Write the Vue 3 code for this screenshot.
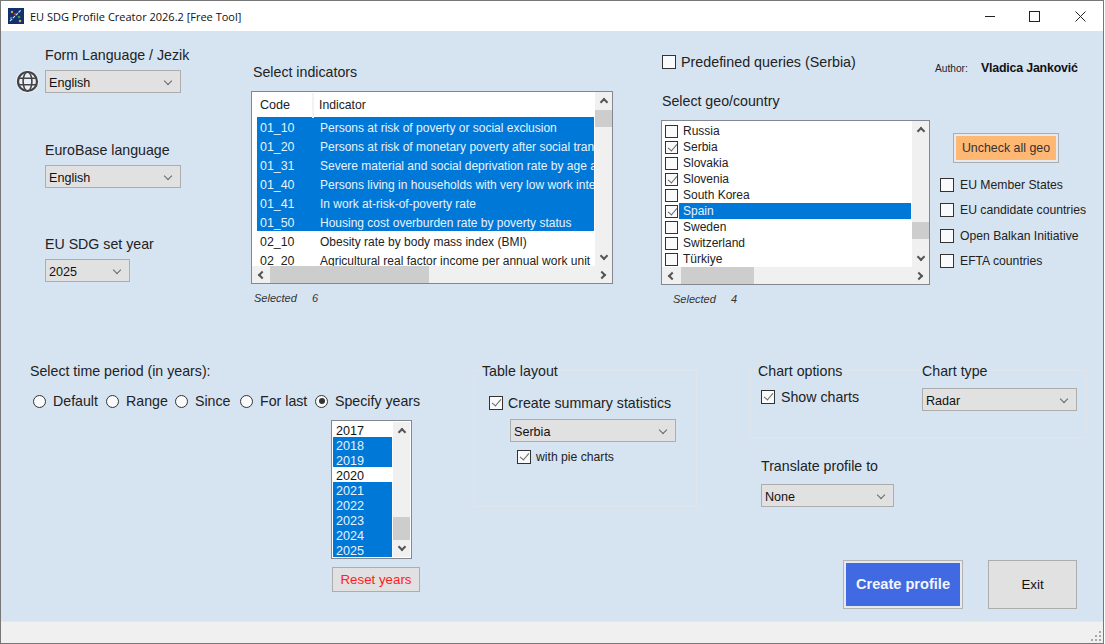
<template>
  <div class="window">
    <header class="titlebar">
      <svg class="logo" viewBox="0 0 16 16" width="16" height="16">
        <rect width="16" height="16" fill="#12306e" />
        <path d="M2 13 L13 2" stroke="#cfd8e8" stroke-width="1.2" stroke-dasharray="3 1" />
        <circle cx="4" cy="4" r="1.2" fill="#e0a030" />
        <circle cx="11" cy="9" r="1.3" fill="#3aa050" />
        <circle cx="7" cy="6" r="1" fill="#d04040" />
        <circle cx="12" cy="13" r="1.3" fill="#e0a030" />
        <circle cx="3" cy="10" r="1" fill="#4a90d0" />
      </svg>
      <span class="title">EU SDG Profile Creator 2026.2 [Free Tool]</span>
      <div class="caption">
        <button class="capbtn shift">
          <svg width="10" height="10" viewBox="0 0 10 10"><path d="M0 5.5H10" stroke="#222" /></svg>
        </button>
        <button class="capbtn shift">
          <svg width="11" height="11" viewBox="0 0 11 11"><rect x=".5" y=".5" width="10" height="10" fill="none" stroke="#222" /></svg>
        </button>
        <button class="capbtn">
          <svg width="11" height="11" viewBox="0 0 11 11"><path d="M.5 .5L10.5 10.5M10.5 .5L.5 10.5" stroke="#222" /></svg>
        </button>
      </div>
    </header>

    <main class="form">
      <section class="upper">
        <div class="col-lang">
          <label class="text lang-label first">Form Language / Jezik</label>
          <div class="globe-row">
            <svg class="globe" viewBox="0 0 23 23" width="23" height="23">
              <circle cx="11.5" cy="11.5" r="11.5" fill="#e9eff6" />
              <circle cx="11.5" cy="11.5" r="9.5" fill="none" stroke="#444" stroke-width="2.2" />
              <ellipse cx="11.5" cy="11.5" rx="4.4" ry="9.5" fill="none" stroke="#444" stroke-width="1.6" />
              <path d="M2 8.3H21M2 14.7H21" stroke="#444" stroke-width="1.6" />
            </svg>
            <div class="select w136"><span>English</span><i class="chev"></i></div>
          </div>
          <label class="text lang-label second">EuroBase language</label>
          <div class="select w136 lang-select"><span>English</span><i class="chev"></i></div>
          <label class="text lang-label third">EU SDG set year</label>
          <div class="select w85 lang-select"><span>2025</span><i class="chev"></i></div>
        </div>

        <div class="col-ind">
          <label class="text ind-label">Select indicators</label>
          <div class="listbox ind-list">
            <div class="list-main">
              <div class="ind-view">
                <div class="ind-head">
                  <span class="code">Code</span>
                  <span class="ind-sep"></span>
                  <span class="name">Indicator</span>
                </div>
                <div
                  v-for="row in indicators"
                  :key="row.code"
                  class="ind-row"
                  :class="{ selected: row.on }"
                >
                  <span class="code">{{ row.code }}</span>
                  <span class="name">{{ row.name }}</span>
                </div>
              </div>
              <div class="vbar">
                <i class="chev bold up"></i>
                <div class="thumb ind-vthumb"></div>
                <i class="chev bold down"></i>
              </div>
            </div>
            <div class="hbar">
              <i class="chev bold left"></i>
              <div class="hthumb ind-hthumb"></div>
              <i class="chev bold right"></i>
            </div>
          </div>
          <div class="count ind-count"><em>Selected</em><em>6</em></div>
        </div>

        <div class="col-geo">
          <div class="predef">
            <span class="box"></span>
            <span class="text big">Predefined queries (Serbia)</span>
          </div>
          <label class="text geo-label">Select geo/country</label>
          <div class="listbox geo-list">
            <div class="list-main">
              <div class="geo-view">
                <div v-for="geo in countries" :key="geo.name" class="geo-row">
                  <span class="box" :class="{ on: geo.on }"></span>
                  <span class="geo-name" :class="{ selected: geo.sel }">{{ geo.name }}</span>
                </div>
              </div>
              <div class="vbar">
                <i class="chev bold up"></i>
                <div class="thumb geo-vthumb"></div>
                <i class="chev bold down"></i>
              </div>
            </div>
            <div class="hbar">
              <i class="chev bold left"></i>
              <div class="hthumb geo-hthumb"></div>
              <i class="chev bold right"></i>
            </div>
          </div>
          <div class="count geo-count"><em>Selected</em><em>4</em></div>
        </div>

        <div class="col-side">
          <div class="author">
            <span class="author-key">Author:</span>
            <strong class="author-name">Vladica Janković</strong>
          </div>
          <button class="btn uncheck"><span>Uncheck all geo</span></button>
          <div v-for="group in groups" :key="group" class="side-check">
            <span class="box"></span>
            <span class="text small">{{ group }}</span>
          </div>
        </div>
      </section>

      <section class="lower">
        <div class="col-time">
          <label class="text">Select time period (in years):</label>
          <div class="radios">
            <div v-for="r in periods" :key="r.name" class="radio-item">
              <span class="radio" :class="{ on: r.on }"></span>
              <span class="text">{{ r.name }}</span>
            </div>
          </div>
          <div class="listbox years">
            <div class="year-view">
              <div v-for="y in years" :key="y.year" class="year" :class="{ selected: y.on }">{{ y.year }}</div>
            </div>
            <div class="vbar year-bar">
              <i class="chev bold up"></i>
              <div class="thumb year-thumb"></div>
              <i class="chev bold down"></i>
            </div>
          </div>
          <button class="btn reset">Reset years</button>
        </div>

        <div class="col-table">
          <div class="group table-group">
            <span class="legend table-legend">Table layout</span>
            <div class="check-row summary">
              <span class="box on"></span>
              <span class="text">Create summary statistics</span>
            </div>
            <div class="select w166 summary-select"><span>Serbia</span><i class="chev"></i></div>
            <div class="check-row pie">
              <span class="box on"></span>
              <span class="text small">with pie charts</span>
            </div>
          </div>
        </div>

        <div class="col-chart">
          <div class="group chart-group">
            <span class="legend options-legend">Chart options</span>
            <span class="legend type-legend">Chart type</span>
            <div class="check-row show-charts">
              <span class="box on"></span>
              <span class="text">Show charts</span>
            </div>
            <div class="select w155"><span>Radar</span><i class="chev"></i></div>
          </div>
          <label class="text translate-label">Translate profile to</label>
          <div class="select w133 translate-select"><span>None</span><i class="chev"></i></div>
          <div class="actions">
            <button class="btn create"><span>Create profile</span></button>
            <button class="btn exit">Exit</button>
          </div>
        </div>
      </section>
    </main>

    <footer class="statusbar">
      <svg class="grip" width="12" height="12" viewBox="0 0 12 12" fill="#a8a8a8">
        <rect x="9" y="1" width="2" height="2" />
        <rect x="5" y="5" width="2" height="2" />
        <rect x="9" y="5" width="2" height="2" />
        <rect x="1" y="9" width="2" height="2" />
        <rect x="5" y="9" width="2" height="2" />
        <rect x="9" y="9" width="2" height="2" />
      </svg>
    </footer>
  </div>
</template>

<script setup>
const indicators = [
  { code: '01_10', name: 'Persons at risk of poverty or social exclusion', on: true },
  { code: '01_20', name: 'Persons at risk of monetary poverty after social transfers', on: true },
  { code: '01_31', name: 'Severe material and social deprivation rate by age and sex', on: true },
  { code: '01_40', name: 'Persons living in households with very low work intensity', on: true },
  { code: '01_41', name: 'In work at-risk-of-poverty rate', on: true },
  { code: '01_50', name: 'Housing cost overburden rate by poverty status', on: true },
  { code: '02_10', name: 'Obesity rate by body mass index (BMI)', on: false },
  { code: '02_20', name: 'Agricultural real factor income per annual work unit', on: false }
]

const countries = [
  { name: 'Russia' },
  { name: 'Serbia', on: true },
  { name: 'Slovakia' },
  { name: 'Slovenia', on: true },
  { name: 'South Korea' },
  { name: 'Spain', on: true, sel: true },
  { name: 'Sweden' },
  { name: 'Switzerland' },
  { name: 'Türkiye' }
]

const groups = ['EU Member States', 'EU candidate countries', 'Open Balkan Initiative', 'EFTA countries']

const periods = [
  { name: 'Default' },
  { name: 'Range' },
  { name: 'Since' },
  { name: 'For last' },
  { name: 'Specify years', on: true }
]

const years = [
  { year: 2017, on: false },
  { year: 2018, on: true },
  { year: 2019, on: true },
  { year: 2020, on: false },
  { year: 2021, on: true },
  { year: 2022, on: true },
  { year: 2023, on: true },
  { year: 2024, on: true },
  { year: 2025, on: true }
]
</script>

<style scoped>
.window {
  width: 1104px;
  height: 644px;
  box-sizing: border-box;
  border: 1px solid #777;
  display: flex;
  flex-direction: column;
  overflow: hidden;
  background: #d6e4f2;
  font-family: "Liberation Sans", Arial, sans-serif;
  font-size: 14.2px;
  color: #222;
}

/* title bar */
.titlebar {
  height: 30px;
  flex: none;
  background: #fff;
  display: flex;
  align-items: center;
  padding-left: 7px;
}
.logo { margin-right: 6px; }
.title {
  font-family: "Open Sans", sans-serif;
  font-size: 11px;
  color: #111;
}
.caption { margin-left: auto; display: flex; }
.capbtn {
  width: 45px;
  height: 30px;
  border: 0;
  padding: 0;
  background: none;
  display: flex;
  align-items: center;
  justify-content: center;
}
.capbtn.shift { padding-right: 2px; }

.form { flex: 1; min-height: 0; display: flex; flex-direction: column; }
.text { color: #222; height: 16px; line-height: 16px; display: block; white-space: nowrap; }
.big { font-size: 14.3px; line-height: 17px; }
.small { font-size: 12.2px; }

/* generic widgets */
.select {
  height: 23px;
  box-sizing: border-box;
  flex: none;
  border: 1px solid #adadad;
  background: #e1e1e1;
  display: flex;
  align-items: center;
  justify-content: space-between;
  padding: 2px 9px 0 3px;
  font-size: 12.6px;
  color: #111;
}
.w136 { width: 136px; }
.w85 { width: 85px; }
.w166 { width: 166px; }
.w155 { width: 155px; }
.w133 { width: 133px; }

.chev {
  display: block;
  width: 6px;
  height: 6px;
  box-sizing: border-box;
  border-right: 1px solid #666;
  border-bottom: 1px solid #666;
  transform: translateY(-2px) rotate(45deg);
}
.chev.bold { width: 6px; height: 6px; border-width: 2px; border-color: #555; flex: none; }
.chev.up { transform: rotate(225deg); }
.chev.down { transform: rotate(45deg); }
.chev.left { transform: rotate(135deg); }
.chev.right { transform: rotate(-45deg); }

.box {
  width: 14px;
  height: 14px;
  box-sizing: border-box;
  flex: none;
  border: 1px solid #333;
  background: #f8fafc;
  display: block;
  position: relative;
}
.box.on::after {
  content: "";
  position: absolute;
  left: 4px;
  top: 0;
  width: 4px;
  height: 8px;
  border-right: 1.3px solid #666;
  border-bottom: 1.3px solid #666;
  transform: rotate(40deg);
}

.radio {
  width: 13px;
  height: 13px;
  box-sizing: border-box;
  flex: none;
  border: 1px solid #333;
  border-radius: 50%;
  background: #f8fafc;
  position: relative;
}
.radio.on::after {
  content: "";
  position: absolute;
  left: 2.5px;
  top: 2.5px;
  width: 6px;
  height: 6px;
  border-radius: 50%;
  background: #333;
}

.listbox {
  box-sizing: border-box;
  border: 1px solid #828790;
  background: #fff;
  overflow: hidden;
}
.list-main { display: flex; height: 174px; }
.vbar {
  width: 17px;
  flex: none;
  background: #f0f0f0;
  display: flex;
  flex-direction: column;
  align-items: center;
  padding: 7px 0;
  box-sizing: border-box;
}
.thumb { width: 100%; height: 17px; background: #cdcdcd; }
.hbar {
  height: 17px;
  background: #f0f0f0;
  display: flex;
  align-items: center;
  padding: 0 7px;
}
.hthumb { height: 100%; background: #cdcdcd; }
.selected { background: #0078d7; color: #e8f2fb; }

.count {
  display: flex;
  font-size: 11px;
  line-height: 13px;
  color: #333;
  margin-top: 8px;
}
.count em:first-child { width: 58px; }

.btn {
  border: 1px solid #adadad;
  background: #e1e1e1;
  font-family: inherit;
  padding: 0;
  color: #111;
  box-sizing: border-box;
}

.group {
  position: relative;
  box-sizing: border-box;
  border: 1px solid #dfe5ea;
}
.legend {
  position: absolute;
  top: -8px;
  line-height: 16px;
  padding: 0 1px;
  background: #d6e4f2;
  white-space: nowrap;
}

/* upper area */
.upper { height: 320px; flex: none; display: flex; padding-left: 15px; }

.col-lang { width: 235px; flex: none; padding-top: 16px; box-sizing: border-box; }
.lang-label { margin-left: 29px; }
.lang-label.first { margin-bottom: 7px; }
.lang-label.second { margin-top: 49px; }
.lang-label.third { margin-top: 48px; }
.globe-row { display: flex; align-items: center; gap: 6px; }
.lang-select { margin: 7px 0 0 29px; }

.col-ind { width: 410px; flex: none; padding-top: 33px; box-sizing: border-box; }
.ind-label { margin-left: 2px; }
.ind-list { width: 362px; height: 193px; margin-top: 11px; }
.ind-view { flex: 1; min-width: 0; overflow: hidden; font-size: 12px; }
.ind-head {
  height: 25px;
  padding-top: 1px;
  box-sizing: border-box;
  display: flex;
  align-items: center;
  color: #222;
}
.ind-head .code { width: 52px; margin-left: 8px; font-size: 12.6px; }
.ind-head .name { margin-left: 5px; font-size: 12.2px; }
.ind-sep { width: 2px; height: 25px; background: #f2f2f2; }
.ind-row {
  height: 19px;
  line-height: 23px;
  margin-left: 5px;
  margin-right: 1px;
  display: flex;
  white-space: nowrap;
  overflow: hidden;
}
.ind-row .code { width: 63px; flex: none; padding-left: 3px; box-sizing: border-box; font-size: 12.4px; }
.ind-vthumb { margin-top: 5px; }
.ind-vthumb + .chev { margin-top: auto; }
.ind-hthumb { width: 159px; margin-left: 5px; }
.ind-hthumb + .chev { margin-left: auto; }
.ind-count { margin-left: 3px; }

.col-geo { width: 268px; flex: none; padding-top: 23px; box-sizing: border-box; }
.predef { display: flex; align-items: center; gap: 5px; height: 16px; margin-left: 1px; }
.geo-label { margin: 23px 0 0 1px; }
.geo-list { width: 269px; height: 165px; margin-top: 11px; }
.geo-list .list-main { height: 146px; }
.geo-view { flex: 1; min-width: 0; overflow: hidden; padding: 2px 1px 0 3px; }
.geo-row { height: 16px; display: flex; align-items: center; font-size: 12px; color: #222; }
.geo-row .box { width: 13px; height: 13px; }
.geo-name { flex: 1; line-height: 16px; margin-left: 1px; padding-left: 4px; }
.geo-name.selected { color: #e8f2fb; }
.geo-vthumb { margin-top: 88px; }
.geo-vthumb + .chev { margin-top: auto; }
.geo-hthumb { width: 73px; margin-left: 6px; }
.geo-hthumb + .chev { margin-left: auto; }
.geo-count { margin-left: 12px; }

.col-side { flex: 1; padding: 29px 0 0 6px; box-sizing: border-box; }
.author { display: flex; align-items: center; height: 14px; white-space: nowrap; margin-top: 1px; }
.author-key { font-size: 10.2px; width: 46px; }
.author-name { font-size: 12.4px; color: #111; letter-spacing: -.2px; }
.uncheck {
  display: block;
  width: 106px;
  height: 30px;
  margin: 58px 0 9px 18px;
  padding: 2px;
  background: #e4eaf0;
}
.uncheck span {
  display: block;
  height: 100%;
  line-height: 25px;
  background: #ffb874;
  font-size: 12.4px;
  color: #333;
}
.side-check { display: flex; align-items: center; gap: 6px; height: 25.5px; margin-left: 5px; }

/* lower area */
.lower { flex: 1; min-height: 0; display: flex; padding-left: 29px; }

.col-time { width: 443px; flex: none; padding-top: 12px; box-sizing: border-box; }
.radios { display: flex; margin: 14px 0 0 3px; height: 16px; }
.radio-item { display: flex; align-items: center; gap: 7px; }
.radio-item:nth-child(1) { width: 73px; }
.radio-item:nth-child(2) { width: 69px; }
.radio-item:nth-child(3) { width: 65px; }
.radio-item:nth-child(4) { width: 75px; }
.years {
  width: 81px;
  height: 139px;
  margin: 11px 0 0 301px;
  display: flex;
  padding: 1px;
}
.year-view { width: 59px; flex: none; }
.year { height: 15px; line-height: 18px; font-size: 12.6px; padding-left: 3px; color: #111; overflow: hidden; }
.year.selected { color: #e8f2fb; }
.year-bar { margin-left: auto; }
.year-thumb { height: 23px; margin-top: 82px; }
.year-thumb + .chev { margin-top: auto; }
.reset {
  display: block;
  width: 88px;
  height: 25px;
  margin: 8px 0 0 302px;
  color: #ff2020;
  font-size: 13.3px;
}

.col-table { width: 224px; flex: none; margin-right: 53px; padding-top: 19px; box-sizing: border-box; }
.table-group { height: 137px; padding: 24px 0 0 15px; }
.table-legend { left: 7px; }
.check-row { display: flex; align-items: center; gap: 5px; }
.summary { height: 16px; }
.summary-select { margin: 8px 0 0 21px; }
.pie { margin: 7px 0 0 28px; height: 16px; }

.col-chart { width: 337px; flex: none; padding-top: 19px; box-sizing: border-box; }
.chart-group { height: 68px; display: flex; align-items: flex-start; }
.options-legend { left: 6px; }
.type-legend { left: 170px; }
.show-charts { width: 161px; margin: 18px 0 0 10px; flex: none; height: 16px; gap: 6px; }
.chart-group .select { margin-top: 17px; }
.translate-label { margin: 20px 0 0 11px; }
.translate-select { margin: 10px 0 0 11px; }
.actions {
  display: flex;
  justify-content: flex-end;
  gap: 25px;
  margin: 53px 10px 0 0;
}
.create {
  width: 120px;
  height: 49px;
  padding: 2px;
  border-color: #b4b4b4;
  background: #e4eaf0;
}
.create span {
  display: block;
  height: 100%;
  line-height: 43px;
  background: #4169e1;
  color: #f2f5fd;
  font-weight: bold;
  font-size: 14.6px;
}
.exit { width: 89px; height: 49px; font-size: 13.3px; }

.statusbar {
  height: 22px;
  flex: none;
  background: #f0f0f0;
  border-top: 1px solid #e6e9ec;
  display: flex;
  justify-content: flex-end;
  align-items: flex-end;
  box-sizing: border-box;
}
.grip { margin: 0 1px 1px 0; }
</style>
